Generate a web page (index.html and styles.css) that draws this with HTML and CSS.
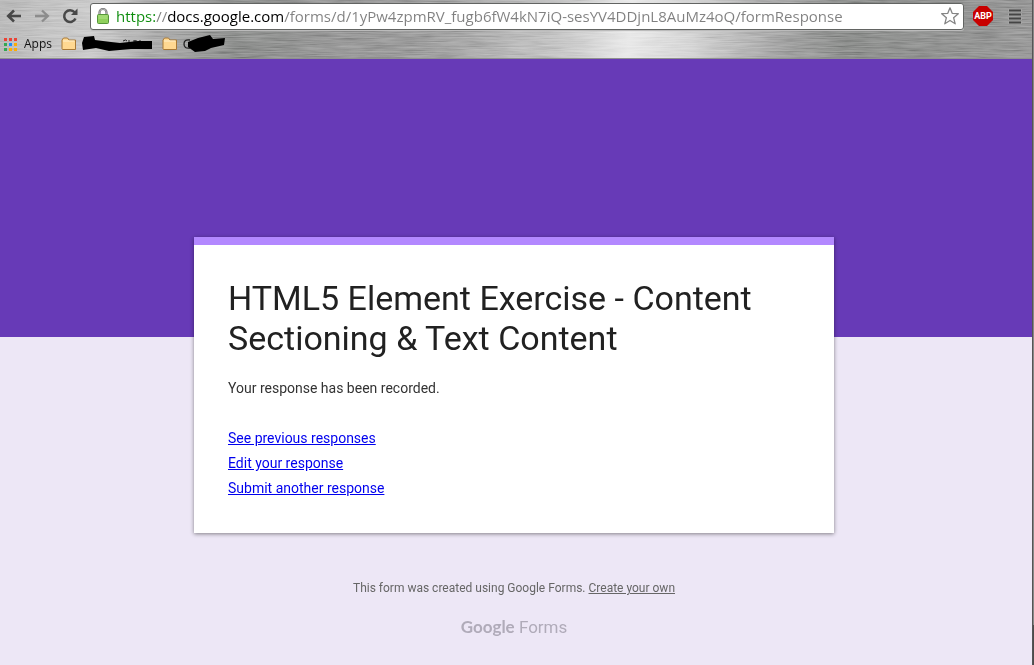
FILE: index.html
```html
<!DOCTYPE html>
<html lang="en">
<head>
<meta charset="utf-8">
<title>HTML5 Element Exercise - Content Sectioning &amp; Text Content</title>
<link rel="stylesheet" href="styles.css">
</head>
<body>
<div class="window">
  <header class="chrome">
    <svg class="grain" aria-hidden="true" width="100%" height="100%">
      <filter id="brushed" x="0" y="0" width="100%" height="100%">
        <feTurbulence type="fractalNoise" baseFrequency="0.03 0.8" numOctaves="3" seed="4"/>
        <feColorMatrix values="0.8 0 0 0 0.1  0.8 0 0 0 0.1  0.8 0 0 0 0.1  0 0 0 0 1"/>
      </filter>
      <rect width="100%" height="100%" filter="url(#brushed)"/>
    </svg>
    <div class="toolbar">
      <button class="tool" type="button" aria-label="Back">
        <svg width="16" height="14" viewBox="0 0 16 14"><path d="M15 7H3M8 1.500L2.200 7L8 12.500" fill="none" stroke="#484848" stroke-width="2.600"/></svg>
      </button>
      <button class="tool" type="button" aria-label="Forward" disabled>
        <svg width="16" height="14" viewBox="0 0 16 14"><path d="M1 7H13M8 1.500L13.800 7L8 12.500" fill="none" stroke="#8c8c8c" stroke-width="2.400"/></svg>
      </button>
      <button class="tool" type="button" aria-label="Reload">
        <svg width="16" height="16" viewBox="0 0 16 16"><path d="M12.600 4.300A5.900 5.900 0 1 0 13.500 10.500" fill="none" stroke="#484848" stroke-width="2.500"/><path d="M15.500 0.500V7H9Z" fill="#484848"/></svg>
      </button>
      <div class="omnibox">
        <svg class="lock" width="12" height="16" viewBox="0 0 12 16" aria-hidden="true"><path d="M2.500 7V4.500A3.500 3.500 0 0 1 9.500 4.500V7" fill="none" stroke="#777" stroke-width="2.200"/><path d="M2.500 7V4.500A3.500 3.500 0 0 1 9.500 4.500V7" fill="none" stroke="#c9c9c9" stroke-width="0.700"/><rect x="0.500" y="6.500" width="11" height="9" rx="1" fill="#8fd05c" stroke="#55963a"/><path d="M1.500 8H10.500M1.500 10H10.500" stroke="#b2e589"/></svg>
        <input class="address" type="text" aria-label="Address" spellcheck="false" value="https://docs.google.com/forms/d/1yPw4zpmRV_fugb6fW4kN7iQ-sesYV4DDjnL8AuMz4oQ/formResponse">
        <button class="star" type="button" aria-label="Bookmark this page">
          <svg width="18" height="18" viewBox="0 0 18 18"><path d="M9 0.800L11.200 6.300L17.300 6.700L12.600 10.700L14.200 16.800L9 13.500L3.800 16.800L5.400 10.700L0.700 6.700L6.800 6.300Z" fill="#fff" stroke="#858585" stroke-width="1.300" stroke-linejoin="round"/></svg>
        </button>
      </div>
      <button class="abp" type="button">ABP</button>
      <button class="menu" type="button" aria-label="Menu">
        <svg width="14" height="15" viewBox="0 0 14 15"><path d="M0 1.500H14M0 5.500H14M0 9.500H14M0 13.500H14" stroke="#a3a3a3" stroke-width="3"/><path d="M1 1.500H13M1 5.500H13M1 9.500H13M1 13.500H13" stroke="#454545" stroke-width="2"/></svg>
      </button>
    </div>
    <nav class="bookmarks" aria-label="Bookmarks">
      <a class="bookmark" href="#">
        <svg width="13" height="13" viewBox="0 0 13 13" aria-hidden="true"><path d="M0 0h3v3H0zM5 0h3v3H5zM10 0h3v3h-3z" fill="#ea4335"/><path d="M0 5h3v3H0zM0 10h3v3H0z" fill="#34a853"/><path d="M5 5h3v3H5z" fill="#1a8cff"/><path d="M10 5h3v3h-3zM5 10h3v3H5zM10 10h3v3h-3z" fill="#fbac05"/></svg>
        <span>Apps</span>
      </a>
      <a class="bookmark folder" href="#" aria-label="Folder one">
        <svg width="16" height="14" viewBox="0 0 16 14" aria-hidden="true"><path d="M1 12V3L2.500 1H6.500L8 3H14.500V12.500H1.500Z" fill="#ffd891" stroke="#a87937" stroke-linejoin="round"/><path d="M2 4H13.500" stroke="#fff0cf"/></svg>
        <svg width="71" height="16" viewBox="0 0 71 16" aria-hidden="true"><path d="M41 5q3-2 4 0M47 4v3M51 5h4M53 4v3M58 4v1" stroke="#222" fill="none"/><path d="M2 1L12 0L13 4L29 6L38 7L56 5H70V13H49L27 15L14 12L1 14L0 7Z"/></svg>
      </a>
      <a class="bookmark folder" href="#" aria-label="Folder two">
        <svg width="16" height="14" viewBox="0 0 16 14" aria-hidden="true"><path d="M1 12V3L2.500 1H6.500L8 3H14.500V12.500H1.500Z" fill="#ffd891" stroke="#a87937" stroke-linejoin="round"/><path d="M2 4H13.500" stroke="#fff0cf"/></svg>
        <svg width="42" height="18" viewBox="0 0 42 18" aria-hidden="true"><path d="M7 5Q1 4 1 9Q1 14 7 13" stroke="#222" stroke-width="1.300" fill="none"/><path d="M5 7L15 3L27 0L30 4L42 3L41 10L28 13L22 16L12 17L5 12Z"/></svg>
      </a>
    </nav>
  </header>
  <main class="page">
    <article class="card">
      <h1 class="title">HTML5 Element Exercise - Content Sectioning &amp; Text Content</h1>
      <p class="message">Your response has been recorded.</p>
      <ul class="links">
        <li><a href="#">See previous responses</a></li>
        <li><a href="#">Edit your response</a></li>
        <li><a href="#">Submit another response</a></li>
      </ul>
    </article>
    <footer class="footer">
      <p class="credit">This form was created using Google Forms. <a href="#">Create your own</a></p>
      <a class="logo" href="#"><span class="logo-name">Google</span> Forms</a>
    </footer>
  </main>
</div>
</body>
</html>
```
FILE: styles.css
```css
* { box-sizing: border-box; }

body {
  margin: 0;
  font-family: Roboto, "Liberation Sans", sans-serif;
  background: linear-gradient(#888 0 94%, #4c4c4c 94%);
}

.window {
  display: flex;
  flex-direction: column;
  min-height: 100vh;
  margin-right: 1px;
  border-right: 1px solid #555;
}

.chrome {
  position: relative;
  border-bottom: 1px solid #8f8f8f;
  background: linear-gradient(95deg, #a8a8a8 0%, #bdbdbd 9%, #999 15%, #747674 23%, #808080 33%, #858585 41%, #a2a2a2 49%, #b5b5b5 54%, #e2e2e2 61%, #c8c8c8 67%, #929292 75%, #737573 82%, #808080 100%);
}

.grain {
  position: absolute;
  inset: 0;
  mix-blend-mode: soft-light;
}

.toolbar, .bookmarks {
  position: relative;
  display: flex;
  align-items: center;
}

.toolbar { height: 32px; padding: 0 10px 0 0; }

button {
  padding: 0;
  border: 0;
  background: none;
  font-family: inherit;
}

button svg { display: block; }

.tool { display: grid; place-items: center; width: 28px; height: 28px; }

.omnibox {
  display: flex;
  flex: 1;
  align-items: center;
  gap: 7px;
  height: 27px;
  margin-left: 6px;
  padding: 0 4px 0 6px;
  border: 1px solid #626462;
  border-radius: 3px;
  background: #fff;
  box-shadow: 0 1px 0 #bbb;
}

.address {
  flex: 1;
  min-width: 0;
  padding: 0;
  border: 0;
  outline: 0;
  font: 15px/24px "Open Sans", "Noto Sans", sans-serif;
  color: transparent;
  caret-color: #000;
  background: linear-gradient(90deg, #0b8c0b 0 39px, #808080 39px 51px, #000 51px 168px, #808080 168px);
  -webkit-background-clip: text;
  background-clip: text;
}

.abp {
  width: 20px;
  height: 20px;
  margin-left: 9px;
  background: #c80000;
  clip-path: polygon(30% 0, 70% 0, 100% 30%, 100% 70%, 70% 100%, 30% 100%, 0 70%, 0 30%);
  color: #fff;
  font: bold 9px/20px Roboto, sans-serif;
}

.menu { margin-left: 15px; }

.bookmarks { height: 26px; gap: 9px; padding: 0 4px 2px; }

.bookmark {
  display: flex;
  align-items: center;
  gap: 7px;
  color: #111;
  font: 12px/16px "Open Sans", sans-serif;
  text-decoration: none;
}

.folder { gap: 5px; }

.page {
  flex: 1;
  padding: 178px 20px 24px 16px;
  background: linear-gradient(#673ab7 0 278px, #ede7f6 278px);
}

.card {
  max-width: 640px;
  margin: 0 auto;
  padding: 33px 34px 32px;
  border-top: 8px solid #b388ff;
  background: #fff;
  box-shadow: 0 1px 4px rgba(0, 0, 0, 0.45);
}

.title {
  margin: 0 0 20px;
  color: #212121;
  font-size: 34px;
  font-weight: 400;
  line-height: 40px;
}

.message {
  margin: 0 0 28px;
  color: #333;
  font-size: 14px;
  line-height: 20px;
}

.links {
  margin: 0;
  padding: 0;
  list-style: none;
  font-size: 14px;
  line-height: 25px;
}

.links a { color: #00e; }

.footer {
  display: flex;
  flex-direction: column;
  align-items: center;
  gap: 18px;
  padding-top: 46px;
  color: #666;
}

.credit { margin: 0; font-size: 12px; line-height: 18px; }
.credit a { color: inherit; }

.logo {
  color: #b0abb9;
  font: 17px/24px Roboto, sans-serif;
  text-decoration: none;
}

.logo-name { font-family: Lato, sans-serif; font-weight: 700; }
```
